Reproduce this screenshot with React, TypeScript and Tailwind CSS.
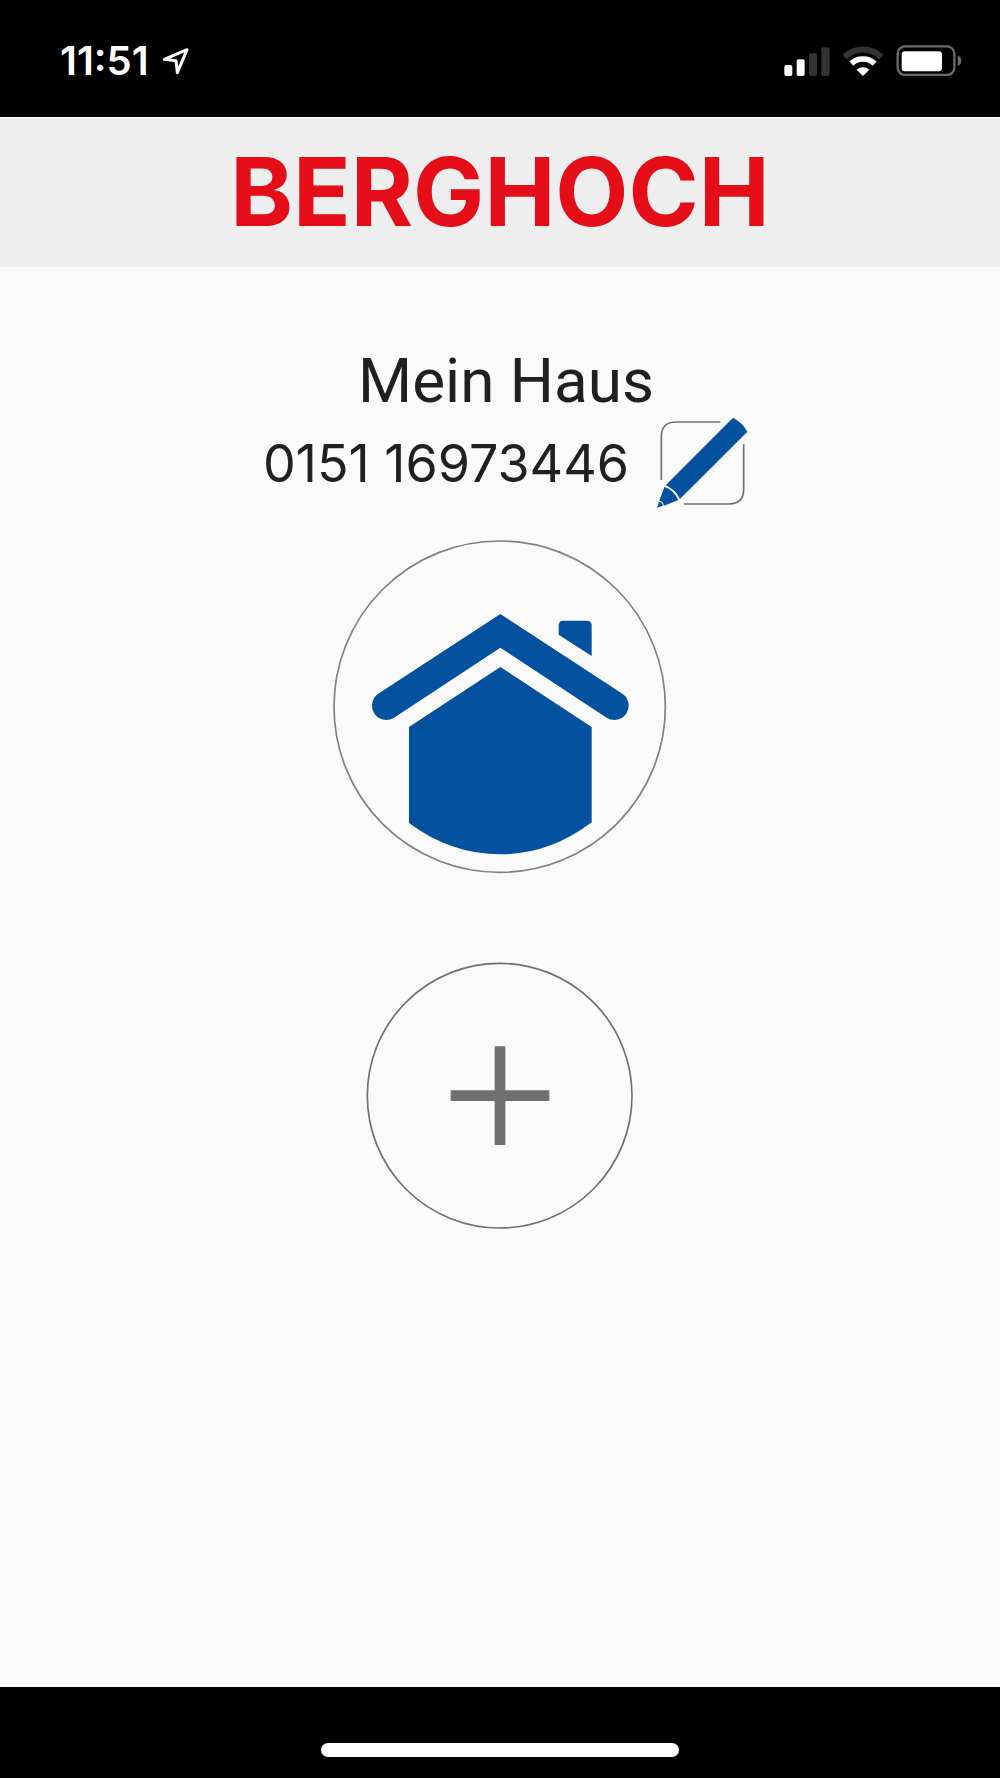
import { ReactNode } from 'react'

function LocationIcon() {
  return (
    <svg viewBox="365 48 90 90" className="h-[30px] w-[30px]" fill="none" aria-hidden="true">
      <path d="M443 59 375 88 410 92 414 128Z" stroke="white" strokeWidth="9" strokeLinejoin="round" />
    </svg>
  )
}

function SignalIcon() {
  return (
    <svg viewBox="41 48 138 90" className="h-[30px] w-[46px]" aria-hidden="true">
      <rect x="42" y="105" width="24" height="33" rx="6" fill="white" />
      <rect x="79" y="88" width="24" height="50" rx="6" fill="white" />
      <rect x="116" y="70" width="24" height="68" rx="6" fill="#333333" />
      <rect x="153" y="52" width="25" height="86" rx="6" fill="#333333" />
    </svg>
  )
}

function WifiIcon() {
  return (
    <svg viewBox="216 48 126 90" className="h-[30px] w-[42px]" fill="none" aria-hidden="true">
      <path d="M224 81A79 79 0 0 1 334 81" stroke="#333333" strokeWidth="18" />
      <path d="M244 101A51 51 0 0 1 314 101" stroke="white" strokeWidth="17" />
      <path d="M279 138 260 119A28 28 0 0 1 298 119Z" fill="white" />
    </svg>
  )
}

function BatteryIcon() {
  return (
    <svg viewBox="379 46 198 93" className="h-[31px] w-[66px]" fill="none" aria-hidden="true">
      <rect x="384" y="50" width="170" height="86" rx="22" stroke="#6b6b6b" strokeWidth="7" />
      <rect x="396" y="65" width="121" height="60" rx="10" fill="white" />
      <path d="M564 77Q575 82 575 93T564 109Z" fill="#6b6b6b" />
    </svg>
  )
}

function EditIcon() {
  return (
    <svg viewBox="50 50 276 276" className="h-[92px] w-[92px]" fill="none" aria-hidden="true">
      <path d="M240 68H107Q63 68 63 112V242" stroke="#707070" strokeWidth="5" />
      <path d="M310 135V270Q310 314 266 314H131" stroke="#707070" strokeWidth="5" />
      <path d="M76 258 278 55Q306 69 321 97L119 299Q104 269 76 258Z" fill="#04529f" />
      <path d="M72 263Q99 270 114 302L71 319Q68 306 57 304Z" fill="#04529f" />
      <path d="M56 307Q66 309 68 319L50 325Z" fill="#04529f" />
    </svg>
  )
}

function HouseIcon() {
  return (
    <svg viewBox="40 33 1002 1002" className="h-[334px] w-[334px]" aria-hidden="true">
      <circle cx="540" cy="533" r="497" fill="none" stroke="#808080" strokeWidth="5" />
      <g fill="#04529f">
        <path d="M542 255 906 493A42 42 0 0 1 862 567L542 356 222 567A42 42 0 0 1 178 493Z" />
        <path d="M717 317V289Q717 275 731 275H802Q816 275 816 289V381Z" />
        <path d="M542 414 816 594V880Q690 976 542 976T268 882V594Z" />
      </g>
    </svg>
  )
}

function PlusIcon() {
  return (
    <svg viewBox="48 36 804 804" className="h-[268px] w-[268px]" fill="none" aria-hidden="true">
      <circle cx="449" cy="437" r="397" stroke="#707070" strokeWidth="5" />
      <path d="M450 289V585M302 437H598" stroke="#707070" strokeWidth="32" />
    </svg>
  )
}

type IconButtonProps = {
  label: string
  className?: string
  children: ReactNode
}

function IconButton({ label, className, children }: IconButtonProps) {
  return (
    <button type="button" aria-label={label} className={className}>
      {children}
    </button>
  )
}

function StatusBar() {
  return (
    <div className="flex h-[117px] items-center justify-between bg-black pt-1 pr-[38px] pl-[60px] text-white">
      <div className="flex items-center gap-3">
        <span className="text-[40px] leading-10 font-semibold">11:51</span>
        <LocationIcon />
      </div>
      <div className="flex items-center gap-3">
        <SignalIcon />
        <WifiIcon />
        <BatteryIcon />
      </div>
    </div>
  )
}

export default function App() {
  return (
    <div className="flex min-h-screen flex-col bg-[#fafafa] font-['Inter',sans-serif] text-[#202020]">
      <StatusBar />
      <header className="flex h-[150px] items-center justify-center border-t border-white bg-[#eeeeee] pb-0.5">
        <span className="text-[95px] leading-none font-bold text-[#e50d18]">BERGHOCH</span>
      </header>

      <main className="flex flex-1 flex-col items-center pt-[79px]">
        <h1 className="pl-3 font-['Roboto',sans-serif] text-[62px] leading-[70px]">Mein Haus</h1>
        <div className="flex items-center gap-7 pl-3">
          <span className="pt-1 text-[52px] leading-[60px]">0151 16973446</span>
          <IconButton label="Bearbeiten">
            <EditIcon />
          </IconButton>
        </div>
        <IconButton label="Mein Haus" className="mt-8 rounded-full">
          <HouseIcon />
        </IconButton>
        <IconButton label="Haus hinzufügen" className="mt-[88px] rounded-full">
          <PlusIcon />
        </IconButton>
      </main>

      <footer className="flex h-[91px] items-end justify-center bg-black pb-[21px]">
        <div className="h-3.5 w-[358px] rounded-full bg-white" />
      </footer>
    </div>
  )
}
